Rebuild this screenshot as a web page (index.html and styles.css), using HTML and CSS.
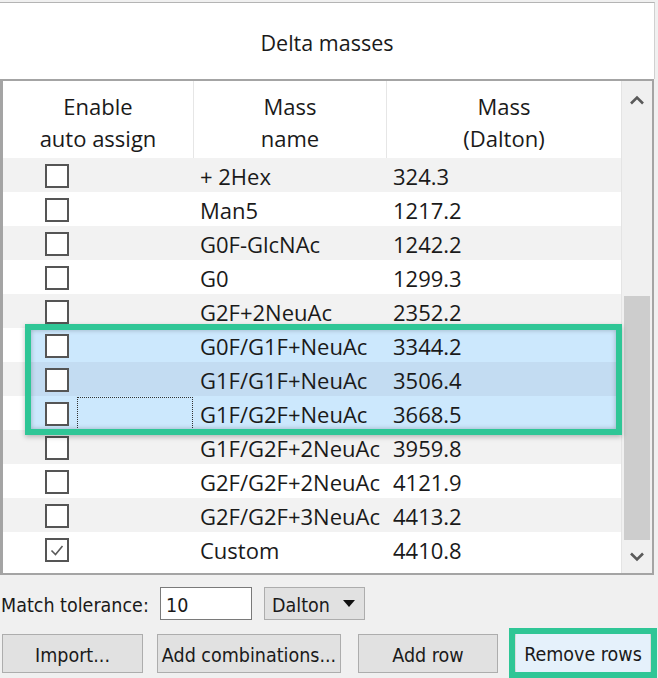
FILE: index.html
```html
<!DOCTYPE html>
<html lang="en">
<head>
<meta charset="utf-8">
<title>Delta masses</title>
<link rel="stylesheet" href="styles.css">
</head>
<body>
<div class="panel">
  <div class="title">Delta masses</div>

  <div class="grid">
    <div class="table">
      <div class="thead">
        <div class="th c1">Enable<br>auto assign</div>
        <div class="th c2">Mass<br>name</div>
        <div class="th c3">Mass<br>(Dalton)</div>
      </div>
      <div class="tbody">
        <div class="row"><div class="cell c1"><span class="box"></span></div><div class="cell c2">+ 2Hex</div><div class="cell c3">324.3</div></div>
        <div class="row"><div class="cell c1"><span class="box"></span></div><div class="cell c2">Man5</div><div class="cell c3">1217.2</div></div>
        <div class="row"><div class="cell c1"><span class="box"></span></div><div class="cell c2">G0F-GlcNAc</div><div class="cell c3">1242.2</div></div>
        <div class="row"><div class="cell c1"><span class="box"></span></div><div class="cell c2">G0</div><div class="cell c3">1299.3</div></div>
        <div class="row"><div class="cell c1"><span class="box"></span></div><div class="cell c2">G2F+2NeuAc</div><div class="cell c3">2352.2</div></div>
        <div class="row sel"><div class="cell c1"><span class="box"></span></div><div class="cell c2">G0F/G1F+NeuAc</div><div class="cell c3">3344.2</div></div>
        <div class="row sel"><div class="cell c1"><span class="box"></span></div><div class="cell c2">G1F/G1F+NeuAc</div><div class="cell c3">3506.4</div></div>
        <div class="row sel"><div class="cell c1"><span class="box"></span><span class="focus"></span></div><div class="cell c2">G1F/G2F+NeuAc</div><div class="cell c3">3668.5</div></div>
        <div class="row"><div class="cell c1"><span class="box"></span></div><div class="cell c2">G1F/G2F+2NeuAc</div><div class="cell c3">3959.8</div></div>
        <div class="row"><div class="cell c1"><span class="box"></span></div><div class="cell c2">G2F/G2F+2NeuAc</div><div class="cell c3">4121.9</div></div>
        <div class="row"><div class="cell c1"><span class="box"></span></div><div class="cell c2">G2F/G2F+3NeuAc</div><div class="cell c3">4413.2</div></div>
        <div class="row"><div class="cell c1"><span class="box checked"><svg viewBox="0 0 20 20" width="20" height="20"><path d="M4.5 10.5 L8.5 14.5 L15.5 6" fill="none" stroke="#5a5a5a" stroke-width="1.6"/></svg></span></div><div class="cell c2">Custom</div><div class="cell c3">4410.8</div></div>
      </div>
    </div>

    <div class="scrollbar">
      <div class="arrow arrow-up"><svg viewBox="0 0 16 10" width="16" height="10"><path d="M2 8.5 L8 2.5 L14 8.5" fill="none" stroke="#5a5a5a" stroke-width="2.6"/></svg></div>
      <div class="track"><div class="thumb"></div></div>
      <div class="arrow arrow-down"><svg viewBox="0 0 16 10" width="16" height="10"><path d="M2 1.5 L8 7.5 L14 1.5" fill="none" stroke="#5a5a5a" stroke-width="2.6"/></svg></div>
    </div>

    <div class="mark rows-mark"></div>
  </div>

  <div class="tolerance">
    <span class="label">Match tolerance:</span>
    <span class="input">10</span>
    <span class="select">Dalton<span class="caret"></span></span>
  </div>

  <div class="buttons">
    <span class="btn b-import">Import...</span>
    <span class="btn b-comb">Add combinations...</span>
    <span class="btn b-add">Add row</span>
    <span class="mark-wrap"><span class="btn b-remove">Remove rows</span></span>
  </div>
</div>
</body>
</html>
```
FILE: styles.css
```css
* { box-sizing: border-box; }

html, body {
  margin: 0;
  padding: 0;
}

body {
  width: 658px;
  height: 678px;
  overflow: hidden;
  background: #f0f0f0;
  color: #1a1a1a;
  font-family: "Open Sans", "Noto Sans", sans-serif;
}

.panel {
  display: flex;
  flex-direction: column;
  height: 678px;
}

/* group title strip */
.title {
  margin-top: 2px;
  width: 655px;
  height: 78px;
  background: #fff;
  border-top: 1px solid #b4b4b4;
  border-right: 1px solid #d0d0d0;
  display: flex;
  align-items: center;
  justify-content: center;
  font-size: 21.5px;
  padding-top: 3px;
}

/* table + scrollbar */
.grid {
  position: relative;
  display: flex;
  width: 654px;
  height: 496px;
  border: 2px solid #a4a4a4;
  border-left-width: 3px;
  background: #fff;
}

.table {
  width: 618px;
  display: flex;
  flex-direction: column;
  font-size: 22px;
}

.thead {
  display: flex;
  height: 77px;
  background: #fff;
}

.th {
  display: flex;
  align-items: center;
  justify-content: center;
  text-align: center;
  line-height: 32px;
  padding-top: 4px;
  border-right: 1px solid #e6e6e6;
}

.th.c3 { border-right: 0; }

.c1 { width: 191px; }
.c2 { width: 193px; }
.c3 { width: 234px; }

.tbody {
  display: flex;
  flex-direction: column;
  flex: 1;
}

.row {
  display: flex;
  height: 34px;
  align-items: center;
}

.row:nth-child(odd) { background: #f2f2f2; }
.row:nth-child(even) { background: #fff; }

/* selection fill starts where the frame starts */
.row.sel:nth-child(even) {
  background: linear-gradient(to right, #fff 0 22px, #cce8fd 22px);
}
.row.sel:nth-child(odd) {
  background: linear-gradient(to right, #f2f2f2 0 22px, #c3dcf2 22px);
}

.cell {
  height: 34px;
  display: flex;
  align-items: center;
  white-space: nowrap;
  padding-top: 1px;
}

.cell.c1 { padding-left: 42px; }
.cell.c2 { padding-left: 6px; }
.cell.c3 { padding-left: 6px; }

.box {
  width: 24px;
  height: 24px;
  border: 2px solid #555;
  background: #fff;
  display: flex;
  align-items: center;
  justify-content: center;
}

.focus {
  margin-left: 8px;
  width: 116px;
  height: 33px;
  border: 1px dotted #333;
}

/* vertical scrollbar */
.scrollbar {
  width: 31px;
  background: #f0f0f0;
  border-left: 1px solid #e4e4e4;
  display: flex;
  flex-direction: column;
}

.arrow {
  height: 34px;
  display: flex;
  align-items: center;
  justify-content: center;
}

.arrow-up { padding-top: 4px; }

.track {
  flex: 1;
  padding: 182px 2px 0 2px;
}

.thumb {
  height: 244px;
  background: #cdcdcd;
}

/* green annotation frames */
.mark {
  position: absolute;
  border: 6px solid #2fc696;
  box-shadow: 0 2px 5px rgba(0, 0, 0, 0.25), inset 0 0 5px rgba(0, 0, 0, 0.25);
  pointer-events: none;
}

.rows-mark {
  left: 22px;
  top: 243px;
  width: 597px;
  height: 111px;
}

/* bottom controls */
.tolerance {
  display: flex;
  align-items: center;
  height: 33px;
  margin-top: 12px;
  font-family: "DejaVu Sans Condensed", "DejaVu Sans", sans-serif;
  font-stretch: condensed;
  font-size: 19.5px;
}

.label {
  margin-left: 1px;
  width: 159px;
  white-space: nowrap;
  padding-top: 3px;
}

.input {
  width: 92px;
  height: 33px;
  background: #fff;
  border: 1px solid #7a7a7a;
  padding: 3px 0 0 5px;
  display: flex;
  align-items: center;
}

.select {
  margin-left: 12px;
  width: 101px;
  height: 33px;
  background: #e1e1e1;
  border: 1px solid #adadad;
  padding: 3px 0 0 7px;
  display: flex;
  align-items: center;
}

.caret {
  margin-left: auto;
  margin-right: 9px;
  margin-bottom: 3px;
  width: 0;
  height: 0;
  border-left: 6px solid transparent;
  border-right: 6px solid transparent;
  border-top: 7px solid #111;
}

.buttons {
  display: flex;
  align-items: flex-start;
  margin-top: 8px;
  font-family: "DejaVu Sans Condensed", "DejaVu Sans", sans-serif;
  font-stretch: condensed;
  font-size: 19.5px;
}

.btn {
  height: 39px;
  background: #e1e1e1;
  border: 1px solid #adadad;
  display: flex;
  align-items: center;
  justify-content: center;
  white-space: nowrap;
  padding-top: 3px;
}

.b-import { margin-left: 2px; width: 141px; margin-top: 6px; }
.b-comb { margin-left: 14px; width: 184px; margin-top: 6px; }
.b-add { margin-left: 17px; width: 140px; margin-top: 6px; }

.mark-wrap {
  margin-left: 11px;
  width: 148px;
  height: 50px;
  border: 6px solid #2fc696;
  box-shadow: inset 0 0 4px rgba(0, 0, 0, 0.2);
  padding: 0 1px;
}

.b-remove {
  width: 100%;
  height: 38px;
  background: #e5f1fb;
  border: 1px solid #e5f1fb;
}
```
